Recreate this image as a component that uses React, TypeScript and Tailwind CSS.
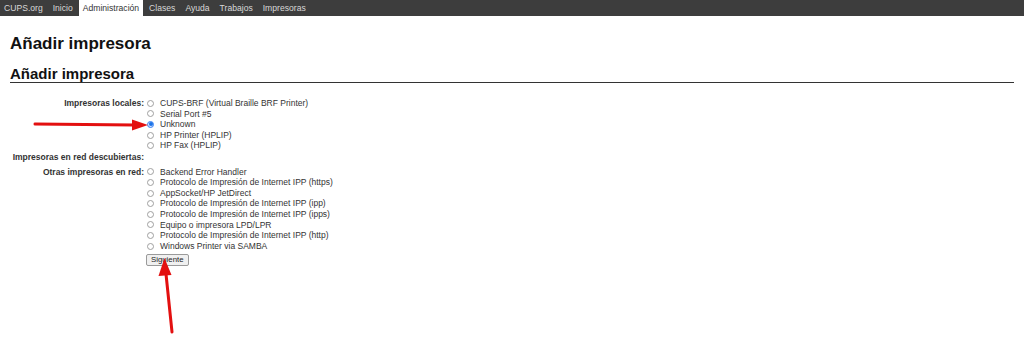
import React from 'react';

const navItems = ['CUPS.org', 'Inicio', 'Administración', 'Clases', 'Ayuda', 'Trabajos', 'Impresoras'];

const localPrinters = [
  'CUPS-BRF (Virtual Braille BRF Printer)',
  'Serial Port #5',
  'Unknown',
  'HP Printer (HPLIP)',
  'HP Fax (HPLIP)',
];

const otherPrinters = [
  'Backend Error Handler',
  'Protocolo de Impresión de Internet IPP (https)',
  'AppSocket/HP JetDirect',
  'Protocolo de Impresión de Internet IPP (ipp)',
  'Protocolo de Impresión de Internet IPP (ipps)',
  'Equipo o impresora LPD/LPR',
  'Protocolo de Impresión de Internet IPP (http)',
  'Windows Printer via SAMBA',
];

const Radio: React.FC<{ checked?: boolean }> = ({ checked }) => (
  <span
    className={`w-[7px] h-[7px] rounded-full border shrink-0 flex items-center justify-center ${
      checked ? 'border-[#3b82f6] bg-[#cfe0fb]' : 'border-[#a0a0a0] bg-white'
    }`}
  >
    {checked && <span className="w-[4px] h-[4px] rounded-full bg-[#1a73e8]" />}
  </span>
);

const Option: React.FC<{ label: string; checked?: boolean }> = ({ label, checked }) => (
  <div className="flex items-center h-[10.6px] gap-[6px] whitespace-nowrap">
    <Radio checked={checked} />
    <span>{label}</span>
  </div>
);

export default function App() {
  return (
    <div className="relative w-[1024px] h-[345px] bg-white overflow-hidden text-[#333]" style={{ fontFamily: '"Liberation Sans", Arial, sans-serif' }}>
      {/* top nav */}
      <div className="h-4 bg-[#3d3d3d] flex items-stretch gap-[2px] text-[8.6px]">
        {navItems.map((item) => (
          <div
            key={item}
            className={`px-1 flex items-center ${
              item === 'Administración' ? 'bg-white text-[#333]' : 'text-[#d8d8d8]'
            }`}
          >
            {item}
          </div>
        ))}
      </div>

      <div className="px-[10px]">
        <h1 className="mt-[18px] text-[17px] leading-[20px] font-bold text-[#111]">Añadir impresora</h1>
        <h2 className="mt-[11px] text-[15px] leading-[17px] font-bold text-[#111] border-b border-[#333]">
          Añadir impresora
        </h2>

        <div className="mt-[15px] text-[8.5px] leading-[10.6px]">
          <div className="flex">
            <div className="w-[134px] text-right font-bold">Impresoras locales:</div>
            <div className="ml-[3px]">
              {localPrinters.map((p) => (
                <Option key={p} label={p} checked={p === 'Unknown'} />
              ))}
            </div>
          </div>

          <div className="mt-[1px] w-[134px] h-[10.6px] text-right font-bold whitespace-nowrap">
            Impresoras en red descubiertas:
          </div>

          <div className="flex mt-[4px]">
            <div className="w-[134px] text-right font-bold">Otras impresoras en red:</div>
            <div className="ml-[3px]">
              {otherPrinters.map((p) => (
                <Option key={p} label={p} />
              ))}
            </div>
          </div>

          <button className="ml-[136px] mt-[3px] h-[12px] px-[4px] text-[7.8px] leading-[10px] bg-[#f0f0f0] border border-[#9a9a9a] rounded-[2px] text-[#222]">
            Siguiente
          </button>
        </div>
      </div>

      {/* annotation arrows */}
      <svg className="absolute inset-0 pointer-events-none" width="1024" height="345" viewBox="0 0 1024 345">
        <line x1="35" y1="124" x2="134" y2="125" stroke="#e31010" strokeWidth="3" strokeLinecap="round" />
        <polygon points="148,125 132,119.5 132,130.5" fill="#e31010" />
        <line x1="172" y1="332" x2="166" y2="274" stroke="#e31010" strokeWidth="3" strokeLinecap="round" />
        <polygon points="164.5,258 158.5,276 171.5,275" fill="#e31010" />
      </svg>
    </div>
  );
}
